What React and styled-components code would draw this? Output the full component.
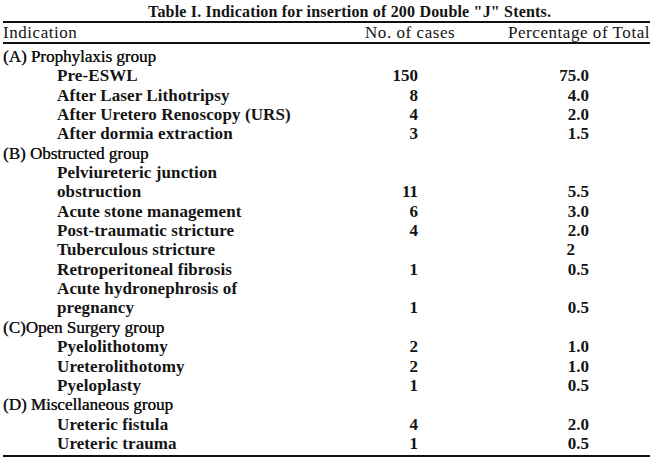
import React from "react";
import styled, { createGlobalStyle } from "styled-components";

const GlobalStyle = createGlobalStyle`
  body {
    margin: 0;
    background: #ffffff;
    font-family: "Liberation Serif", "Times New Roman", serif;
    color: #141414;
  }
`;

const Page = styled.div`
  width: 650px;
  height: 462px;
  overflow: hidden;
  background: #fff;
`;

const Title = styled.div`
  height: 21px;
  padding-left: 148px;
  font-size: 16px;
  font-weight: 700;
  letter-spacing: 0.18px;
  line-height: 24px;
  white-space: nowrap;
`;

const Rule = styled.div`
  height: 2px;
  margin-left: 3px;
  background: #111;
`;

const HeaderRow = styled.div`
  display: grid;
  grid-template-columns: 362px 143px 1fr;
  height: 19px;
  padding-left: 3px;
  font-size: 17px;
  letter-spacing: 0.55px;
  line-height: 20px;
  white-space: nowrap;

  & > span:first-child {
    margin-left: -3px;
    padding-left: 3px;
  }
`;

const Body = styled.div`
  padding: 3px 0 1.6px;
`;

const Row = styled.div`
  display: grid;
  grid-template-columns: 360px 58px 171px 1fr;
  height: 19.35px;
  font-size: 17px;
  line-height: 19.35px;
  white-space: nowrap;
`;

const Label = styled.span`
  padding-left: ${(p) => (p.$group ? 3 : 57)}px;
  font-weight: ${(p) => (p.$group ? 400 : 700)};
  letter-spacing: ${(p) => (p.$group ? 0 : 0.1)}px;
  text-shadow: ${(p) => (p.$group ? "0.3px 0 0 #141414" : "none")};
`;

const Count = styled.span`
  text-align: right;
  font-weight: 700;
`;

const Pct = styled.span`
  text-align: right;
  font-weight: 700;
  padding-right: ${(p) => p.$pad || 0}px;
`;

const rows = [
  { label: "(A) Prophylaxis group", group: true },
  { label: "Pre-ESWL", n: "150", pct: "75.0" },
  { label: "After Laser Lithotripsy", n: "8", pct: "4.0" },
  { label: "After Uretero Renoscopy (URS)", n: "4", pct: "2.0" },
  { label: "After dormia extraction", n: "3", pct: "1.5" },
  { label: "(B) Obstructed group", group: true },
  { label: "Pelviureteric junction" },
  { label: "obstruction", n: "11", pct: "5.5" },
  { label: "Acute stone management", n: "6", pct: "3.0" },
  { label: "Post-traumatic stricture", n: "4", pct: "2.0" },
  { label: "Tuberculous stricture", pct: "2", pad: 14 },
  { label: "Retroperitoneal fibrosis", n: "1", pct: "0.5" },
  { label: "Acute hydronephrosis of" },
  { label: "pregnancy", n: "1", pct: "0.5" },
  { label: "(C)Open Surgery group", group: true },
  { label: "Pyelolithotomy", n: "2", pct: "1.0" },
  { label: "Ureterolithotomy", n: "2", pct: "1.0" },
  { label: "Pyeloplasty", n: "1", pct: "0.5" },
  { label: "(D) Miscellaneous group", group: true },
  { label: "Ureteric fistula", n: "4", pct: "2.0" },
  { label: "Ureteric trauma", n: "1", pct: "0.5" },
];

const App = () => {
  return (
    <>
      <GlobalStyle />
      <Page>
        <Title>Table I. Indication for insertion of 200 Double "J" Stents.</Title>
        <Rule />
        <HeaderRow>
          <span>Indication</span>
          <span>No. of cases</span>
          <span>Percentage of Total</span>
        </HeaderRow>
        <Rule />
        <Body>
          {rows.map((r) => (
            <Row key={r.label}>
              <Label $group={r.group}>{r.label}</Label>
              <Count>{r.n}</Count>
              <Pct $pad={r.pad}>{r.pct}</Pct>
            </Row>
          ))}
        </Body>
        <Rule />
      </Page>
    </>
  );
};

export default App;
